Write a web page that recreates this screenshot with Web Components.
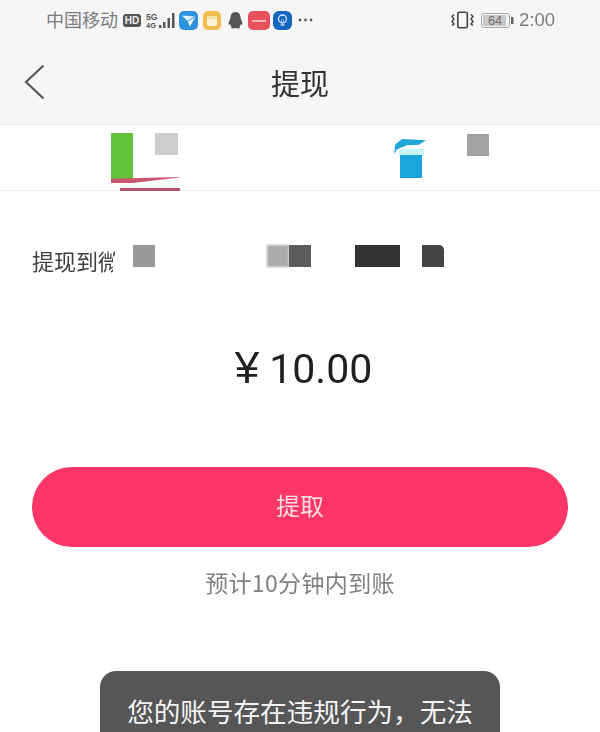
<!doctype html>
<html>
<head>
<meta charset="utf-8">
<style>
  html, body { margin: 0; height: 732px; overflow: hidden; background: #fff; }
  body { font-family: "Noto Sans CJK SC", "Liberation Sans", sans-serif; }
</style>
</head>
<body>
<withdraw-page>
  <status-bar slot="status"></status-bar>
  <nav-header slot="header" title="提现"></nav-header>
  <account-tabs slot="tabs"></account-tabs>
  <target-row slot="target" label="提现到微"></target-row>
  <amount-display slot="amount" value="10.00"></amount-display>
  <pill-button slot="action">提取</pill-button>
  <span slot="hint">预计10分钟内到账</span>
  <toast-message slot="toast">您的账号存在违规行为，无法</toast-message>
</withdraw-page>

<script>
const CJK = `"Noto Sans CJK SC", "Liberation Sans", sans-serif`;

class WithdrawPage extends HTMLElement {
  constructor() {
    super();
    this.attachShadow({ mode: "open" });
    this.shadowRoot.innerHTML = `
      <style>
        :host { display: flex; flex-direction: column; position: relative; width: 600px; height: 732px; overflow: hidden; filter: blur(.4px); }
        .top { background: #f6f6f6; border-bottom: 1px solid #e9e9e9; }
        .hint { text-align: center; margin-top: 20px; font: 23px/30px ${CJK}; letter-spacing: .35px; color: #808080; }
      </style>
      <div class="top"><slot name="status"></slot><slot name="header"></slot></div>
      <slot name="tabs"></slot>
      <slot name="target"></slot>
      <slot name="amount"></slot>
      <slot name="action"></slot>
      <div class="hint"><slot name="hint"></slot></div>
      <slot name="toast"></slot>
    `;
  }
}

class StatusBar extends HTMLElement {
  constructor() {
    super();
    this.attachShadow({ mode: "open" });
    this.shadowRoot.innerHTML = `
      <style>
        :host { display: flex; align-items: center; height: 40px; padding: 0 45px 0 46px; box-sizing: border-box; color: #7c7c7c; font: 18px/40px ${CJK}; }
        .left, .right { display: flex; align-items: center; }
        .left { gap: 4px; }
        .right { margin-left: auto; }
        .carrier { margin: -2px 1px 0 0; }
        .time { font: 18.5px/40px "Liberation Sans", sans-serif; margin-left: 5px; color: #7c7c7c; }
        svg { display: block; }
      </style>
      <div class="left">
        <span class="carrier">中国移动</span>
        <svg width="18" height="13" viewBox="0 0 18 13"><rect width="18" height="13" rx="3" fill="#565656"/><text x="9" y="10.300" text-anchor="middle" font-family="Liberation Sans" font-size="10" font-weight="700" fill="#eee">HD</text></svg>
        <svg width="29" height="17" viewBox="0 0 29 17" style="margin-left:1px">
          <text x="0" y="7.500" font-family="Liberation Sans" font-size="8.500" font-weight="700" fill="#555">5G</text>
          <text x="0" y="16" font-family="Liberation Sans" font-size="7.500" font-weight="700" fill="#555">4G</text>
          <g fill="#555"><rect x="13" y="13" width="2.500" height="3"/><rect x="17" y="10" width="2.500" height="6"/><rect x="21.500" y="6" width="2.500" height="10"/><rect x="26" y="1" width="2.500" height="15"/></g>
        </svg>
        <svg width="19" height="19" viewBox="0 0 19 19"><rect width="19" height="19" rx="5" fill="#2f92dc"/><path d="M3 4.500l13.500 1-5.500 10-2.500-5.500z" fill="#e8f4fd"/><path d="M8.500 10l8-4.500" stroke="#2f92dc" stroke-width="1"/></svg>
        <svg width="18" height="19" viewBox="0 0 18 19" style="margin-left:1px"><rect width="18" height="19" rx="5" fill="#f1bd50"/><rect x="4" y="6" width="10" height="9" rx="2.500" fill="#fdf3dd"/><rect x="4" y="5" width="10" height="3" rx="1" fill="#f8dfa8"/></svg>
        <svg width="17" height="19" viewBox="0 0 17 19" style="margin-left:2px"><path d="M8.500 1c3.500 0 5 2.800 5 5.500 0 1.500 2 4.500 2 6.500 0 1.200-.8 1-1.800 0 0 1.500-.7 2.500-1.500 3 1 .4 1.300 1.500-.7 1.500-1.300 0-2.200-.3-3-.5-.8.200-1.700.5-3 .500-2 0-1.700-1.100-.7-1.500-.8-.5-1.500-1.500-1.500-3-1 1-1.800 1.200-1.800 0 0-2 2-5 2-6.500C3.500 3.800 5 1 8.500 1z" fill="#555"/></svg>
        <svg width="22" height="19" viewBox="0 0 22 19"><rect width="22" height="19" rx="5" fill="#e8505b"/><rect x="4" y="9" width="14" height="2" fill="#f7b4b8"/></svg>
        <svg width="19" height="19" viewBox="0 0 19 19" style="margin-left:-1px"><rect width="19" height="19" rx="6" fill="#1566c0"/><circle cx="9.500" cy="8" r="4" fill="none" stroke="#dbe9fa" stroke-width="1.300"/><path d="M7.500 14h4" stroke="#dbe9fa" stroke-width="1.300"/><path d="M8.500 11.500v-3M10.500 11.500v-3" stroke="#dbe9fa" stroke-width=".7"/></svg>
        <svg width="15" height="4" viewBox="0 0 15 4" style="margin-left:2px"><g fill="#5e5e5e"><circle cx="2" cy="2" r="1.400"/><circle cx="7.500" cy="2" r="1.400"/><circle cx="13" cy="2" r="1.400"/></g></svg>
      </div>
      <div class="right">
        <svg width="23" height="18" viewBox="0 0 23 18" fill="none" stroke="#444"><rect x="6.800" y="1.200" width="9.500" height="15.500" rx="1.500" stroke-width="1.600"/><path d="M3 3.500l-2 2 2 2.500-2 2.500 2 2.500-2 1.500M20 3.500l2 2-2 2.500 2 2.500-2 2.500 2 1.500" stroke-width="1.400"/></svg>
        <svg width="33" height="15" viewBox="0 0 33 15" style="margin-left:7px">
          <rect x=".5" y=".5" width="28" height="14" rx="2" fill="#f3f3f3" stroke="#a8a8a8"/>
          <rect x="2" y="2" width="23" height="11" fill="#c8c8c8"/>
          <text x="14" y="12" text-anchor="middle" font-family="Liberation Sans" font-size="12.500" fill="#6e6e6e">64</text>
          <rect x="30" y="4" width="2.500" height="7" fill="#666"/>
        </svg>
        <span class="time">2:00</span>
      </div>
    `;
  }
}

class NavHeader extends HTMLElement {
  constructor() {
    super();
    this.attachShadow({ mode: "open" });
    this.shadowRoot.innerHTML = `
      <style>
        :host { display: flex; align-items: center; justify-content: center; position: relative; height: 84px; color: #333; font: 29px/84px ${CJK}; }
        span { margin-top: -1px; }
        button { position: absolute; left: 24px; top: 24px; padding: 0; border: 0; background: none; display: block; }
        svg { display: block; }
      </style>
      <button aria-label="返回"><svg width="22" height="36" viewBox="0 0 22 36" fill="none"><path d="M19.500 1.500L2 18l17.500 16.500" stroke="#555" stroke-width="2.100"/></svg></button>
      <span>${this.getAttribute("title")}</span>
    `;
  }
}

class AccountTabs extends HTMLElement {
  constructor() {
    super();
    this.attachShadow({ mode: "open" });
    this.shadowRoot.innerHTML = `
      <style>
        :host { display: grid; grid-template-columns: 283px 1fr; height: 66px; box-sizing: border-box; border-bottom: 1px solid #ececec; background: #fff; }
        .tab { position: relative; }
        i { position: absolute; display: block; }
      </style>
      <div class="tab">
        <i style="left:111px;top:8px;width:22px;height:46px;background:#63c43c"></i>
        <i style="left:155px;top:8px;width:23px;height:22px;background:#cdcdcd;filter:blur(.6px)"></i>
        <i style="left:111px;top:52px;width:68px;height:6px;background:#c9566f;clip-path:polygon(0 30%,100% 0,100% 8%,32% 100%,0 100%)"></i>
        <i style="left:120px;top:63px;width:60px;height:3px;background:#b5506a"></i>
      </div>
      <div class="tab">
        <i style="left:111px;top:13px;width:32px;height:16px;background:#1ea6d8;clip-path:polygon(0 100%,4% 40%,25% 6%,100% 14%,78% 42%,40% 45%,10% 70%)"></i>
        <i style="left:116px;top:24px;width:25px;height:7px;background:#c8f6fb"></i>
        <i style="left:117px;top:30px;width:22px;height:23px;background:#1aa6dc"></i>
        <i style="left:184px;top:9px;width:22px;height:22px;background:#a2a2a2"></i>
      </div>
    `;
  }
}

class TargetRow extends HTMLElement {
  constructor() {
    super();
    this.attachShadow({ mode: "open" });
    this.shadowRoot.innerHTML = `
      <style>
        :host { display: block; position: relative; height: 82px; font: 22px/32px ${CJK}; color: #3f3f3f; }
        .label { position: absolute; left: 32px; top: 53px; width: 87px; overflow: hidden; white-space: nowrap; clip-path: polygon(0 0, 86px 0, 86px 30%, 81px 40%, 81px 100%, 0 100%); }
        i { position: absolute; display: block; top: 54px; height: 22px; }
      </style>
      <div class="label">${this.getAttribute("label")}</div>
      <i style="left:133px;width:22px;background:#999"></i>
      <i style="left:267px;width:22px;background:#ababab;filter:blur(.8px)"></i>
      <i style="left:289px;width:22px;background:#5c5c5c"></i>
      <i style="left:355px;width:45px;background:#333"></i>
      <i style="left:422px;width:22px;background:#444;border-top-right-radius:5px"></i>
    `;
  }
}

class AmountDisplay extends HTMLElement {
  constructor() {
    super();
    this.attachShadow({ mode: "open" });
    this.shadowRoot.innerHTML = `
      <style>
        :host { display: flex; justify-content: center; align-items: baseline; margin-top: 71px; height: 48px; color: #1f1f1f; font: 41px/48px Roboto, sans-serif; padding-left: 7px; }
        b { font: 400 44px/48px "Liberation Sans", sans-serif; margin-right: 10px; }
      </style>
      <b>¥</b><span>${this.getAttribute("value")}</span>
    `;
  }
}

class PillButton extends HTMLElement {
  constructor() {
    super();
    this.attachShadow({ mode: "open" });
    this.shadowRoot.innerHTML = `
      <style>
        :host { display: block; margin: 75px 32px 0; }
        button { display: block; width: 100%; height: 80px; border: 0; border-radius: 40px; padding: 0 0 5px; background: #fb3565; color: #ffdbe2; font: 24px/34px ${CJK}; }
      </style>
      <button><slot></slot></button>
    `;
  }
}

class ToastMessage extends HTMLElement {
  constructor() {
    super();
    this.attachShadow({ mode: "open" });
    this.shadowRoot.innerHTML = `
      <style>
        :host { display: block; position: absolute; left: 100px; top: 671px; width: 400px; height: 110px; box-sizing: border-box; border-radius: 16px; background: #565656; color: #f4f4f4; text-align: center; padding-top: 20px; font: 26.6px/40px ${CJK}; white-space: nowrap; }
      </style>
      <slot></slot>
    `;
  }
}

customElements.define("withdraw-page", WithdrawPage);
customElements.define("status-bar", StatusBar);
customElements.define("nav-header", NavHeader);
customElements.define("account-tabs", AccountTabs);
customElements.define("target-row", TargetRow);
customElements.define("amount-display", AmountDisplay);
customElements.define("pill-button", PillButton);
customElements.define("toast-message", ToastMessage);
</script>
</body>
</html>
